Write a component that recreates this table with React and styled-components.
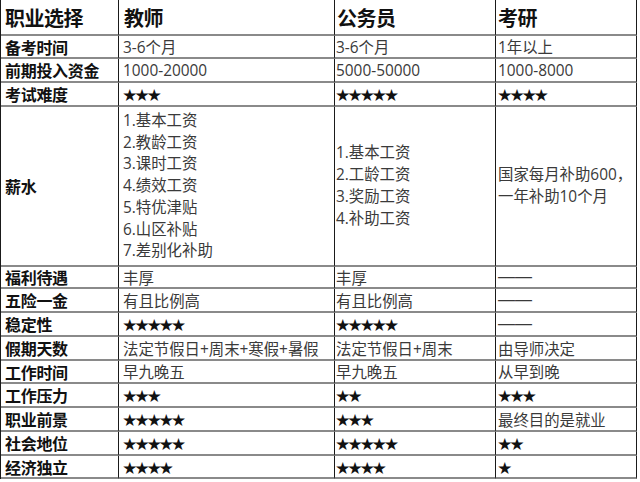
import React from 'react';
import styled, { createGlobalStyle } from 'styled-components';

const GlobalStyle = createGlobalStyle`
  html, body {
    margin: 0;
    padding: 0;
    background: #ffffff;
  }
  body {
    font-family: "Open Sans", "Noto Sans CJK SC", sans-serif;
  }
`;

const rows = [
  { label: '备考时间', h: 23, values: ['3-6个月', '3-6个月', '1年以上'] },
  { label: '前期投入资金', h: 24, values: ['1000-20000', '5000-50000', '1000-8000'] },
  { label: '考试难度', h: 24, values: ['★★★', '★★★★★', '★★★★'] },
  {
    label: '薪水',
    h: 160,
    values: [
      ['1.基本工资', '2.教龄工资', '3.课时工资', '4.绩效工资', '5.特优津贴', '6.山区补贴', '7.差别化补助'],
      ['1.基本工资', '2.工龄工资', '3.奖励工资', '4.补助工资'],
      ['国家每月补助600，', '一年补助10个月'],
    ],
  },
  { label: '福利待遇', h: 22, values: ['丰厚', '丰厚', '——'] },
  { label: '五险一金', h: 24, values: ['有且比例高', '有且比例高', '——'] },
  { label: '稳定性', h: 24, values: ['★★★★★', '★★★★★', '——'] },
  { label: '假期天数', h: 24, values: ['法定节假日+周末+寒假+暑假', '法定节假日+周末', '由导师决定'] },
  { label: '工作时间', h: 23, values: ['早九晚五', '早九晚五', '从早到晚'] },
  { label: '工作压力', h: 24, values: ['★★★', '★★', '★★★'] },
  { label: '职业前景', h: 24, values: ['★★★★★', '★★★', '最终目的是就业'] },
  { label: '社会地位', h: 24, values: ['★★★★★', '★★★★★', '★★'] },
  { label: '经济独立', h: 23, values: ['★★★★', '★★★★', '★'] },
];

const pads = [4, 1, 2];

const kindOf = (v) => {
  if (v.includes('★')) return 'star';
  if (v.includes('—')) return 'dash';
  return 'text';
};

function App() {
  const template = [36, ...rows.map((r) => r.h)].map((h) => `${h}px`).join(' ');
  return (
    <>
      <GlobalStyle />
      <Table style={{ gridTemplateRows: template }}>
        <HeadCell>职业选择</HeadCell>
        <HeadCell $pad={5}>教师</HeadCell>
        <HeadCell $pad={2}>公务员</HeadCell>
        <HeadCell $pad={2}>考研</HeadCell>
        {rows.map((row) => (
          <React.Fragment key={row.label}>
            <LabelCell>{row.label}</LabelCell>
            {row.values.map((v, i) => (
              <Cell key={i} $pad={pads[i]}>
                {Array.isArray(v) ? (
                  <Lines>
                    {v.map((line) => (
                      <Line key={line}>{line}</Line>
                    ))}
                  </Lines>
                ) : (
                  <Value $kind={kindOf(v)}>{v}</Value>
                )}
              </Cell>
            ))}
          </React.Fragment>
        ))}
      </Table>
    </>
  );
}

export default App;

const Table = styled.div`
  display: grid;
  grid-template-columns: 118px 216px 161px 141px;
  width: 637px;
  border-left: 1px solid #1a1a1a;
  box-sizing: border-box;
`;

const BaseCell = styled.div`
  display: flex;
  align-items: center;
  box-sizing: border-box;
  border-right: 1px solid #1a1a1a;
  border-bottom: 2px solid #8a8a8a;
  overflow: hidden;
  white-space: nowrap;
`;

const HeadCell = styled(BaseCell)`
  padding-left: ${(p) => p.$pad || 4}px;
  font-size: 20px;
  font-weight: 700;
  color: #111;
  letter-spacing: -0.5px;
`;

const LabelCell = styled(BaseCell)`
  padding-left: 4px;
  font-size: 16px;
  font-weight: 700;
  color: #111;
  letter-spacing: -0.3px;
`;

const Cell = styled(BaseCell)`
  padding-left: ${(p) => p.$pad}px;
  font-size: 15.4px;
  color: #3a3a3a;
`;

const fontFor = {
  star: '"Noto Sans CJK SC", sans-serif',
  dash: '"Liberation Sans", sans-serif',
  text: 'inherit',
};

const sizeFor = {
  star: '13.5px',
  dash: '17px',
  text: '15.4px',
};

const Value = styled.span`
  color: ${(p) => (p.$kind === 'star' ? '#111' : '#3a3a3a')};
  font-size: ${(p) => sizeFor[p.$kind]};
  font-family: ${(p) => fontFor[p.$kind]};
  letter-spacing: ${(p) => (p.$kind === 'star' ? '-1.3px' : '0')};
`;

const Lines = styled.div`
  display: flex;
  flex-direction: column;
`;

const Line = styled.div`
  line-height: 21.8px;
`;
